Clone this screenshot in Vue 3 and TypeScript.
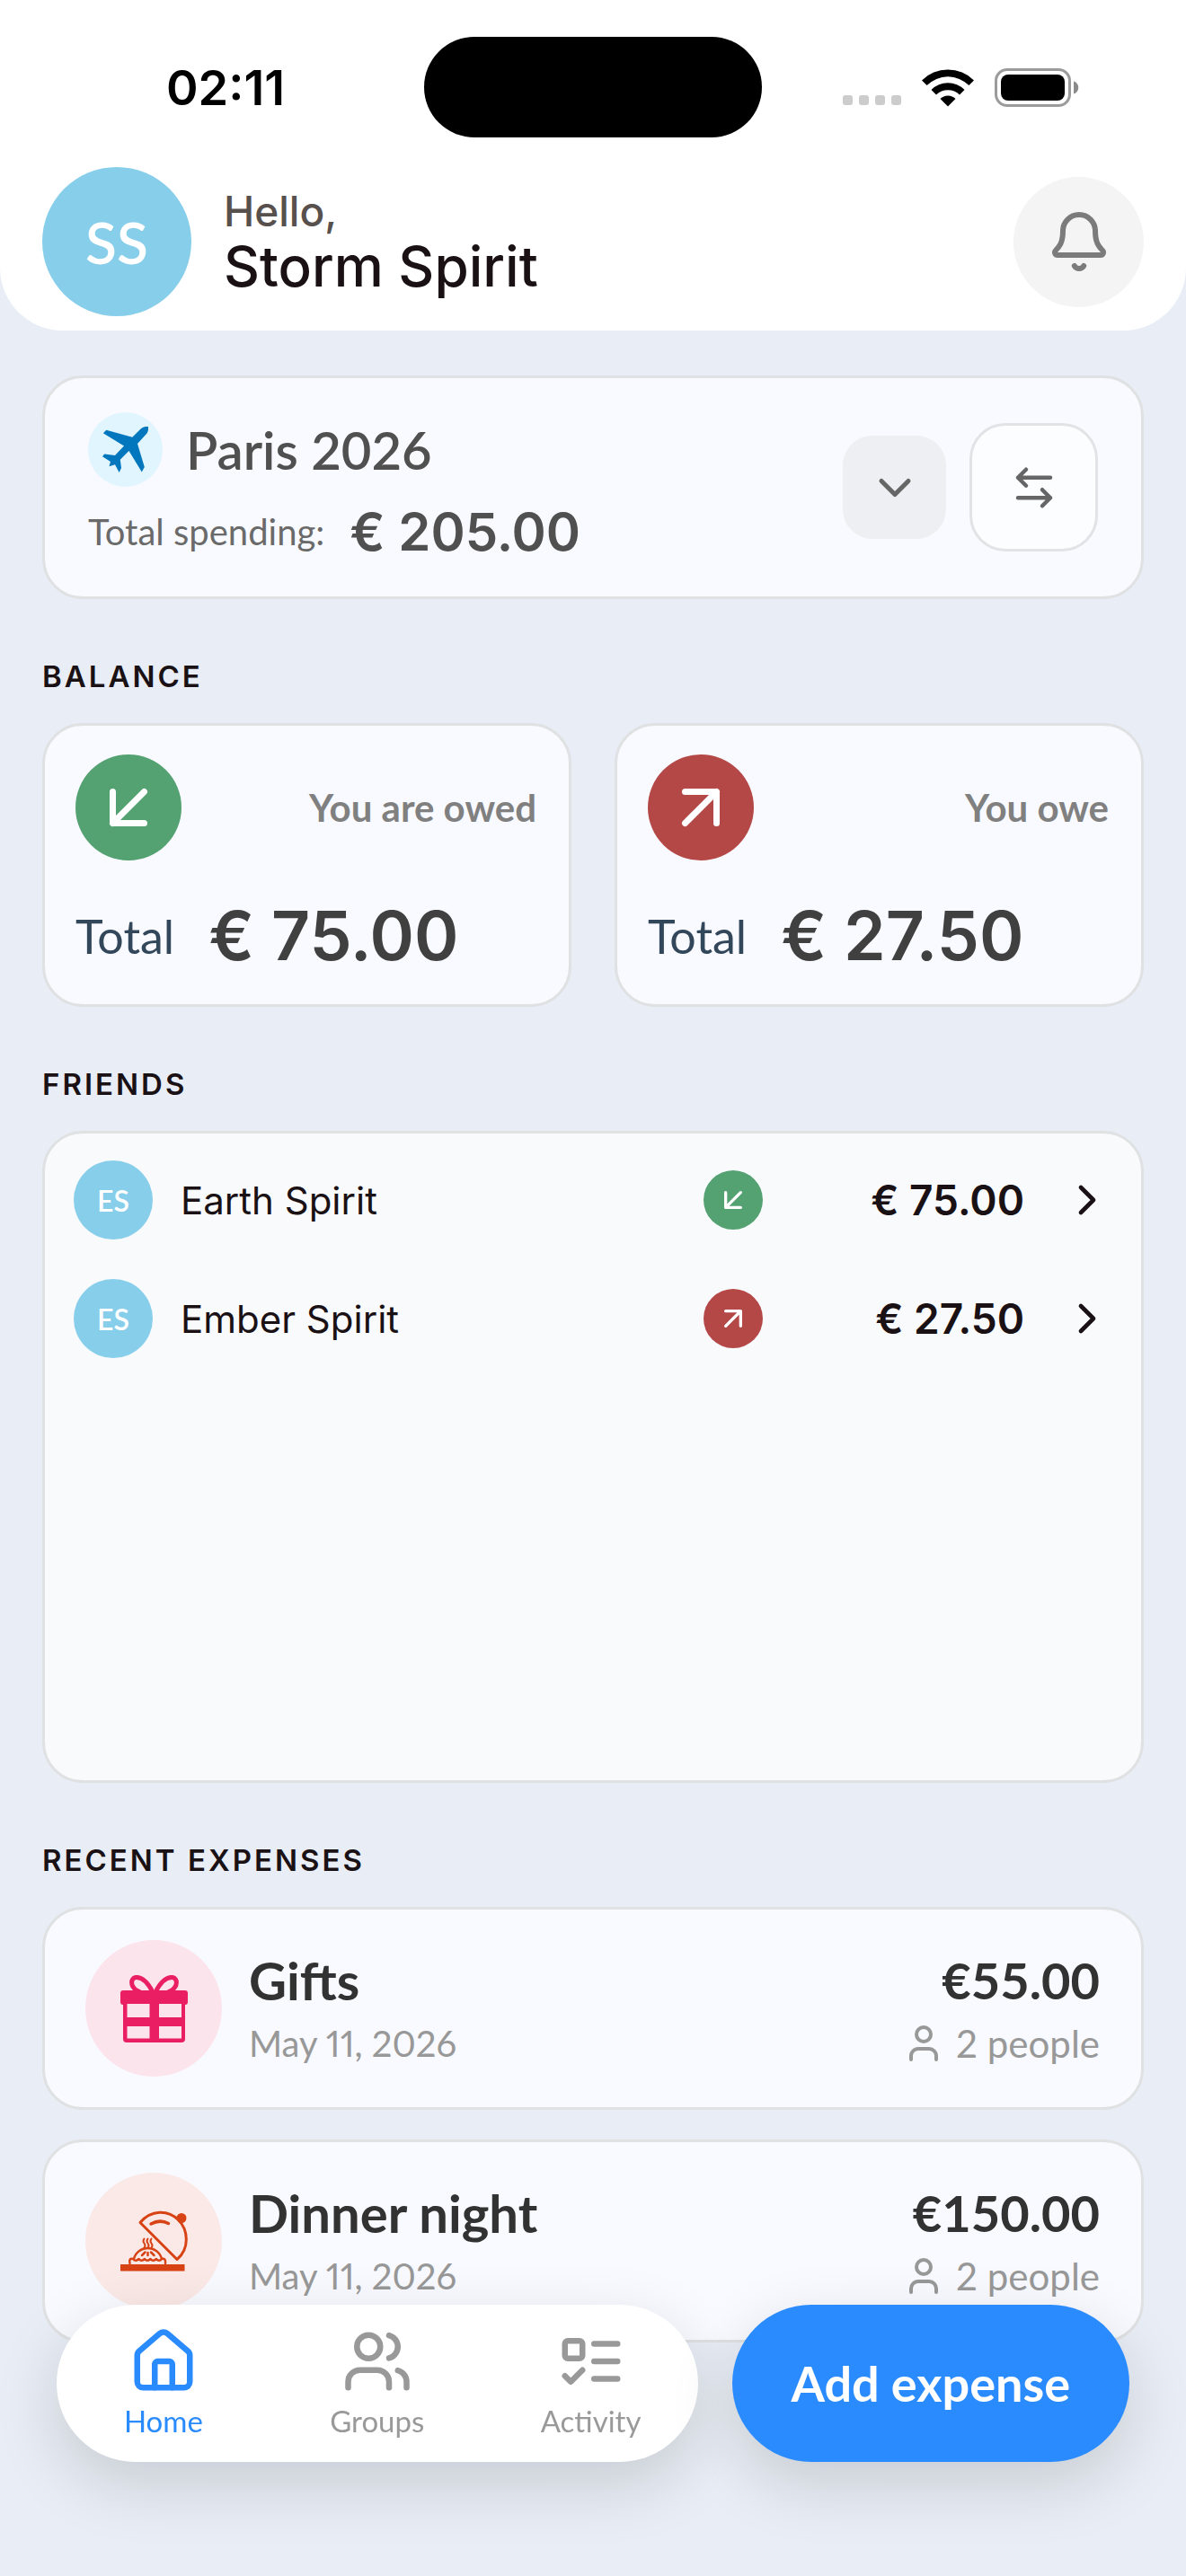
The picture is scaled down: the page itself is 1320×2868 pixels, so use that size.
<script setup lang="ts">
import { ref } from 'vue'

type Direction = 'in' | 'out'

interface Balance {
  label: string
  amount: string
  direction: Direction
}

interface Friend {
  name: string
  initials: string
  amount: string
  direction: Direction
}

interface Expense {
  title: string
  date: string
  amount: string
  people: string
  category: 'gift' | 'dinner'
}

const balances: Balance[] = [
  { label: 'You are owed', amount: '€ 75.00', direction: 'in' },
  { label: 'You owe', amount: '€ 27.50', direction: 'out' },
]

const friends: Friend[] = [
  { name: 'Earth Spirit', initials: 'ES', amount: '€ 75.00', direction: 'in' },
  { name: 'Ember Spirit', initials: 'ES', amount: '€ 27.50', direction: 'out' },
]

const expenses: Expense[] = [
  { title: 'Gifts', date: 'May 11, 2026', amount: '€55.00', people: '2 people', category: 'gift' },
  { title: 'Dinner night', date: 'May 11, 2026', amount: '€150.00', people: '2 people', category: 'dinner' },
]

const tabs = ['Home', 'Groups', 'Activity'] as const
const activeTab = ref<(typeof tabs)[number]>('Home')

const arrows: Record<Direction, string> = {
  in: 'M17 7 7 17M17 17H7V7',
  out: 'M7 7h10v10M7 17 17 7',
}
</script>

<template>
  <div class="screen">
    <header class="header">
      <div class="status">
        <span class="time">02:11</span>
        <span class="island"></span>
        <div class="indicators">
          <span class="signal"><i></i><i></i><i></i><i></i></span>
          <svg class="wifi" viewBox="0 0 58 43" aria-hidden="true">
            <path d="M0 13.5a41 41 0 0 1 58 0l-5.600 5.600a33 33 0 0 0-46.800 0z" />
            <path d="M10.500 24a26 26 0 0 1 37 0l-5.500 5.500a18.500 18.500 0 0 0-26 0z" />
            <path d="M20.500 34a12 12 0 0 1 17 0L29 42.500z" />
          </svg>
          <svg class="battery" viewBox="0 0 94 43" aria-hidden="true">
            <rect x="1.500" y="1.500" width="82" height="40" rx="12.500" fill="none" stroke="#9b9b9b" stroke-width="3" />
            <rect x="7" y="7" width="71" height="29" rx="8" />
            <path d="M88 14.500c7 2 7 12 0 14z" fill="#8a8a8a" />
          </svg>
        </div>
      </div>
      <div class="profile">
        <span class="avatar avatar-large">SS</span>
        <div class="greeting">
          <p class="hello">Hello,</p>
          <h1 class="username">Storm Spirit</h1>
        </div>
        <button class="bell" type="button" aria-label="Notifications">
          <svg class="line-icon" width="72" height="72" viewBox="0 0 24 24">
            <path d="M10.268 21a2 2 0 0 0 3.464 0" />
            <path d="M3.262 15.326A1 1 0 0 0 4 17h16a1 1 0 0 0 .740-1.673C19.410 13.956 18 12.499 18 8A6 6 0 0 0 6 8c0 4.499-1.411 5.956-2.738 7.326" />
          </svg>
        </button>
      </div>
    </header>

    <main class="content">
      <section class="card trip">
        <div class="trip-info">
          <div class="trip-title">
            <span class="trip-icon">
              <svg width="52" height="52" viewBox="0 0 52 52" aria-hidden="true">
                <path d="M42.600 2.600Q45 0 48 0h3v3q0 2.500-1.500 4.500L39 19l7.800 26-3 5.500L29.500 27l-9.700 9.700L21 46l-2.400 5-4.600-8.700-6.500 1.900 1.500-5.200L0 33.200l2.200-2.600L14 32l10-10.500L.800 7.300l3.500-3.600 29 8z" />
              </svg>
            </span>
            <h2>Paris 2026</h2>
          </div>
          <p class="spending"><span>Total spending:</span><strong>€ 205.00</strong></p>
        </div>
        <div class="trip-actions">
          <button class="expand" type="button" aria-label="Choose group">
            <svg class="line-icon" width="60" height="60" viewBox="0 0 24 24"><path d="m6 9 6 6 6-6" /></svg>
          </button>
          <button class="swap" type="button" aria-label="Switch group">
            <svg class="line-icon" width="54" height="54" viewBox="0 0 24 24">
              <path d="M8 3 4 7l4 4M4 7h16M16 21l4-4-4-4M20 17H4" />
            </svg>
          </button>
        </div>
      </section>

      <section>
        <h2 class="section-title">BALANCE</h2>
        <div class="balances">
          <article v-for="item in balances" :key="item.label" class="card balance">
            <div class="balance-top">
              <span class="badge badge-large" :class="item.direction">
                <svg class="line-icon" width="84" height="84" viewBox="0 0 24 24"><path :d="arrows[item.direction]" /></svg>
              </span>
              <span class="balance-label">{{ item.label }}</span>
            </div>
            <p class="balance-total"><span>Total</span><strong>{{ item.amount }}</strong></p>
          </article>
        </div>
      </section>

      <section>
        <h2 class="section-title">FRIENDS</h2>
        <ul class="card friends">
          <li v-for="friend in friends" :key="friend.name">
            <button class="friend" type="button">
              <span class="avatar avatar-small">{{ friend.initials }}</span>
              <span class="friend-name">{{ friend.name }}</span>
              <span class="badge badge-small" :class="friend.direction">
                <svg class="line-icon" width="40" height="40" viewBox="0 0 24 24"><path :d="arrows[friend.direction]" /></svg>
              </span>
              <span class="friend-amount">{{ friend.amount }}</span>
              <svg class="line-icon" width="56" height="56" viewBox="0 0 24 24" aria-hidden="true"><path d="m9 18 6-6-6-6" /></svg>
            </button>
          </li>
        </ul>
      </section>

      <section>
        <h2 class="section-title">RECENT EXPENSES</h2>
        <div class="expenses">
          <article v-for="expense in expenses" :key="expense.title" class="card expense">
            <span class="category" :class="expense.category">
              <svg v-if="expense.category === 'gift'" width="75" height="75" viewBox="0 0 75 75" aria-hidden="true">
                <path
                  fill-rule="evenodd"
                  d="M3 17h69a3 3 0 0 1 3 3v10a3 3 0 0 1-3 3v38a4 4 0 0 1-4 4H7a4 4 0 0 1-4-4V33a3 3 0 0 1-3-3V20a3 3 0 0 1 3-3zM7.500 32v15h25V32zM43 32v15h25V32zM7.500 57v13.500h25V57zM43 57v13.500h25V57z"
                />
                <g fill="none" stroke="currentColor" stroke-width="5">
                  <path d="M36 19C30 7 23 2 17 2.500c-6 1-6 10 1 14.500l4 2" />
                  <path d="M39 19C45 7 52 2 58 2.500c6 1 6 10-1 14.500l-4 2" />
                </g>
              </svg>
              <svg v-else width="75" height="75" viewBox="0 0 75 75" aria-hidden="true">
                <path d="M0 63h71.500v7.500H0z" />
                <circle cx="68" cy="11.500" r="5.500" />
                <g fill="none" stroke="currentColor" stroke-linecap="round" stroke-linejoin="round">
                  <path stroke-width="3" d="M22 16.500C34 2 53 2 64.500 13.500S77 46 63 57.500z" />
                  <path stroke-width="3.500" d="M34 18q10-5.500 19.500-.500" />
                  <path stroke-width="2" d="M26.500 34.500q-2 2.500 0 5t0 5M30.500 34.500q-2 2.500 0 5t0 5M34.500 34.500q-2 2.500 0 5t0 5" />
                  <path stroke-width="2.500" d="M15 57c2-8 9-12 15.500-12S44 49 46 57M10.500 62q-1.500-6 3.500-5 3 3.500 6.500 0 3 3.500 6.500 0 3 3.500 6.500 0 3 3.500 6.500 0 3 3.500 6 0 5-1 4 5" />
                  <path stroke-width="2.500" d="m27.500 49.500-3.500 3.500M30.500 50v3M34 49.500l3.500 3.500" />
                </g>
              </svg>
            </span>
            <div class="expense-text">
              <h3>{{ expense.title }}</h3>
              <p>{{ expense.date }}</p>
            </div>
            <div class="expense-total">
              <strong>{{ expense.amount }}</strong>
              <p>
                <svg class="line-icon" width="48" height="48" viewBox="0 0 24 24" aria-hidden="true">
                  <path d="M19 21v-2a4 4 0 0 0-4-4H9a4 4 0 0 0-4 4v2" />
                  <circle cx="12" cy="7" r="4" />
                </svg>
                <span>{{ expense.people }}</span>
              </p>
            </div>
          </article>
        </div>
      </section>
    </main>

    <div class="dock">
      <nav class="tabs">
        <a
          v-for="tab in tabs"
          :key="tab"
          href="#"
          class="tab"
          :class="{ active: tab === activeTab }"
          @click.prevent="activeTab = tab"
        >
          <svg class="line-icon" width="78" height="78" viewBox="0 0 24 24" aria-hidden="true">
            <g v-if="tab === 'Home'">
              <path d="M15 21v-8a1 1 0 0 0-1-1h-4a1 1 0 0 0-1 1v8" />
              <path d="M3 10a2 2 0 0 1 .709-1.528l7-5.999a2 2 0 0 1 2.582 0l7 5.999A2 2 0 0 1 21 10v9a2 2 0 0 1-2 2H5a2 2 0 0 1-2-2z" />
            </g>
            <g v-else-if="tab === 'Groups'">
              <path d="M16 21v-2a4 4 0 0 0-4-4H6a4 4 0 0 0-4 4v2M22 21v-2a4 4 0 0 0-3-3.870M16 3.130a4 4 0 0 1 0 7.750" />
              <circle cx="9" cy="7" r="4" />
            </g>
            <g v-else>
              <rect x="3" y="5" width="6" height="6" rx="1" />
              <path d="m3 17 2 2 4-4M13 6h8M13 12h8M13 18h8" />
            </g>
          </svg>
          <span>{{ tab }}</span>
        </a>
      </nav>
      <button class="add" type="button">Add expense</button>
    </div>
  </div>
</template>

<style>
body {
  background: #e9eef6;
}
</style>

<style scoped>
.screen {
  min-height: 100vh;
  background: #e9eef6;
  color: #1a1115;
  font-family: Inter, 'Liberation Sans', sans-serif;
}

h1,
h2,
h3,
p,
ul {
  margin: 0;
  padding: 0;
}

ul {
  list-style: none;
}

button {
  margin: 0;
  padding: 0;
  border: 0;
  background: none;
  color: inherit;
  font: inherit;
  cursor: pointer;
}

svg {
  display: block;
  flex: none;
  fill: currentColor;
}

.line-icon {
  fill: none;
  stroke: currentColor;
  stroke-width: 2;
  stroke-linecap: round;
  stroke-linejoin: round;
}

/* Header */
.header {
  padding: 41px 47px 16px;
  border-radius: 0 0 70px 70px;
  background: #fff;
}

.status {
  display: grid;
  grid-template-columns: 1fr 376px 1fr;
  align-items: center;
  justify-items: center;
  margin: 0 -17px 33px;
  color: #000;
}

.time {
  font-size: 54px;
  font-weight: 600;
}

.island {
  width: 376px;
  height: 112px;
  border-radius: 56px;
  background: #000;
}

.indicators {
  display: flex;
  align-items: center;
  gap: 23px;
}

.signal {
  display: flex;
  align-self: flex-end;
  gap: 7px;
  padding-bottom: 2px;
}

.signal i {
  width: 11px;
  height: 11px;
  border-radius: 3px;
  background: #ccc;
}

.wifi {
  width: 58px;
  height: 43px;
}

.battery {
  width: 94px;
  height: 43px;
}

.profile {
  display: flex;
  align-items: center;
}

.avatar {
  display: flex;
  flex: none;
  align-items: center;
  justify-content: center;
  border-radius: 50%;
  background: #87ceeb;
  color: #fff;
  font-family: Lato, sans-serif;
  font-weight: 600;
}

.avatar-large {
  width: 166px;
  height: 166px;
  font-size: 64px;
}

.avatar-small {
  width: 88px;
  height: 88px;
  font-size: 32px;
}

.greeting {
  flex: 1;
  margin-left: 36px;
}

.hello {
  color: #57504d;
  font-size: 46px;
  font-weight: 500;
  line-height: 56px;
}

.username {
  font-size: 62px;
  font-weight: 500;
  line-height: 68px;
}

.bell {
  display: flex;
  align-items: center;
  justify-content: center;
  width: 145px;
  height: 145px;
  border-radius: 50%;
  background: #f4f4f4;
  color: #7b7b7b;
}

/* Shared card */
.content {
  padding: 50px 47px 259px;
}

.card {
  box-sizing: border-box;
  border: 3px solid #dfe1e3;
  border-radius: 45px;
  background: #f9faff;
}

.section-title {
  margin: 66px 0 32px;
  font-size: 33px;
  font-weight: 600;
  line-height: 40px;
  letter-spacing: 3px;
}

/* Trip */
.trip {
  display: flex;
  align-items: center;
  justify-content: space-between;
  padding: 38px 48px;
}

.trip-title {
  display: flex;
  align-items: center;
  gap: 26px;
}

.trip-icon {
  display: flex;
  align-items: center;
  justify-content: center;
  width: 83px;
  height: 83px;
  border-radius: 50%;
  background: #e1f5fe;
  color: #0277bd;
}

.trip-title h2 {
  color: #505050;
  font-family: Lato, sans-serif;
  font-size: 58px;
  font-weight: 600;
  line-height: 72px;
}

.spending {
  display: flex;
  align-items: center;
  gap: 28px;
  margin-top: 16px;
  color: #6a6a6a;
  font-family: Lato, sans-serif;
  font-size: 40px;
  line-height: 68px;
}

.spending strong {
  color: #505050;
  font-family: Inter, sans-serif;
  font-size: 58px;
  font-weight: 600;
}

.trip-actions {
  display: flex;
  align-items: center;
  gap: 26px;
  color: #666;
}

.expand,
.swap {
  display: flex;
  box-sizing: border-box;
  align-items: center;
  justify-content: center;
}

.expand {
  width: 115px;
  height: 115px;
  border-radius: 33px;
  background: #eeeff3;
}

.swap {
  width: 143px;
  height: 143px;
  border: 3px solid #e1e3e5;
  border-radius: 40px;
  background: #fcfdff;
}

/* Balance */
.balances {
  display: grid;
  grid-template-columns: 1fr 1fr;
  gap: 48px;
}

.balance {
  padding: 32px 36px 32px 34px;
}

.balance-top {
  display: flex;
  align-items: center;
  justify-content: space-between;
}

.badge {
  display: flex;
  flex: none;
  align-items: center;
  justify-content: center;
  border-radius: 50%;
  color: #fff;
}

.badge.in {
  background: #54a172;
}

.badge.out {
  background: #b44846;
}

.badge-large {
  width: 118px;
  height: 118px;
}

.badge-small {
  width: 66px;
  height: 66px;
}

.balance-label {
  color: #808080;
  font-family: Lato, sans-serif;
  font-size: 42px;
  font-weight: 700;
}

.balance-total {
  display: flex;
  align-items: center;
  gap: 38px;
  margin-top: 40px;
  color: #33475b;
  font-family: Lato, sans-serif;
  font-size: 52px;
  line-height: 88px;
}

.balance-total strong {
  color: #404040;
  font-family: Inter, sans-serif;
  font-size: 75px;
  font-weight: 600;
}

/* Friends */
.friends {
  min-height: 726px;
  padding: 8px 32px;
  background: #f9fafc;
}

.friend {
  display: flex;
  align-items: center;
  width: 100%;
  height: 132px;
  text-align: left;
}

.friend-name {
  flex: 1;
  margin-left: 31px;
  font-size: 42px;
}

.friend-amount {
  width: 291px;
  margin-right: 42px;
  font-size: 46px;
  font-weight: 600;
  text-align: right;
}

/* Expenses */
.expenses {
  display: grid;
  gap: 33px;
}

.expense {
  display: flex;
  align-items: center;
  padding: 34px 46px 34px 45px;
}

.category {
  display: flex;
  flex: none;
  align-items: center;
  justify-content: center;
  width: 152px;
  height: 152px;
  border-radius: 50%;
}

.category.gift {
  background: #fce4ec;
  color: #e91e63;
}

.category.dinner {
  background: #fbe9e7;
  color: #d84315;
}

.expense-text,
.expense-total {
  color: #989898;
  font-family: Lato, sans-serif;
}

.expense-text {
  flex: 1;
  margin-left: 30px;
  font-size: 40px;
  font-variant-numeric: proportional-nums;
}

.expense-total {
  font-size: 42px;
  text-align: right;
}

.expense-text h3,
.expense-total strong {
  display: block;
  margin-bottom: 6px;
  color: #323232;
  font-weight: 700;
  line-height: 72px;
}

.expense-text h3 {
  font-size: 58px;
}

.expense-total strong {
  font-size: 56px;
}

.expense-text p,
.expense-total p {
  line-height: 56px;
}

.expense-total p {
  display: flex;
  align-items: center;
  justify-content: flex-end;
  gap: 12px;
}

/* Dock floating over the page */
.dock {
  position: fixed;
  right: 63px;
  bottom: 127px;
  left: 63px;
  display: flex;
  gap: 38px;
  font-family: Lato, sans-serif;
}

.tabs,
.add {
  height: 175px;
  border-radius: 88px;
  box-shadow: 0 24px 72px rgba(0, 0, 0, 0.15);
}

.tabs {
  display: grid;
  flex: 1;
  grid-template-columns: repeat(3, 1fr);
  background: #fff;
}

.tab {
  display: flex;
  flex-direction: column;
  align-items: center;
  gap: 7px;
  padding-top: 24px;
  color: #999;
  font-size: 33px;
  line-height: 40px;
  text-decoration: none;
}

.tab.active {
  color: #2a8bff;
}

.add {
  padding: 0 66px;
  background: #2a8bff;
  color: #fff;
  font-size: 54px;
  font-weight: 700;
}
</style>
